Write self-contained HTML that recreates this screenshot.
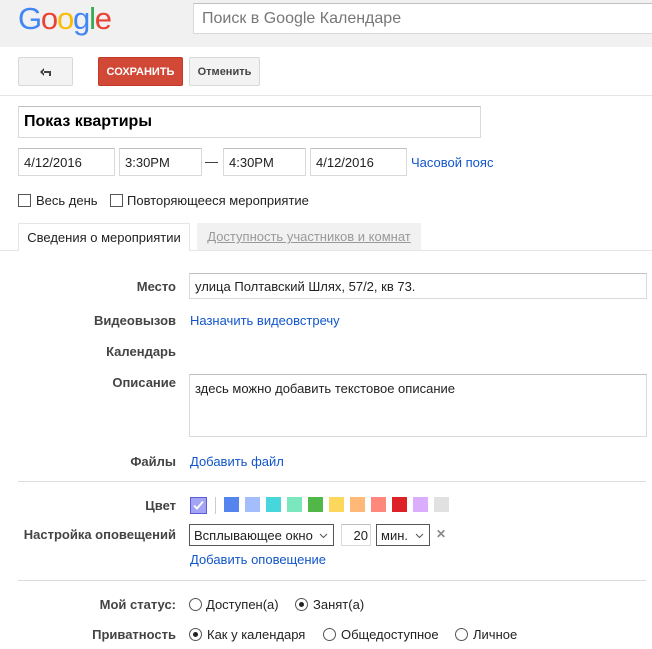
<!DOCTYPE html>
<html><head><meta charset="utf-8"><style>
*{box-sizing:border-box;margin:0;padding:0}
body{width:652px;height:649px;overflow:hidden;background:#fff;font-family:"Liberation Sans",Arial,sans-serif;font-size:13px;color:#222;position:relative}
.a{position:absolute;white-space:nowrap}
.inp{position:absolute;border:1px solid #d9d9d9;border-top-color:#c0c0c0;background:#fff;padding-left:5px;color:#222;display:flex;align-items:center}
.lbl{position:absolute;right:476px;font-weight:bold;color:#444;white-space:nowrap}
.lnk{color:#15c}
.line{position:absolute;height:1px;background:#dcdcdc}
.cb{position:absolute;width:13px;height:13px;border:1px solid #555;background:#fff}
.rd{position:absolute;width:13px;height:13px;border:1px solid #555;border-radius:50%;background:#fff}
.rd.on::after{content:"";position:absolute;left:3px;top:3px;width:5px;height:5px;border-radius:50%;background:#222}
.sw{position:absolute;top:497px;width:15px;height:15px}
.sel{position:absolute;border:1px solid #555;background:#fff;padding-left:4px;display:flex;align-items:center}
.sel svg{position:absolute;right:5px;top:8px}
.btn{position:absolute;top:57px;height:29px;border-radius:2px;font-weight:bold;font-size:11px;display:flex;align-items:center;justify-content:center}
</style></head><body>
<div class="a" style="left:0;top:0;width:652px;height:47px;background:#f1f1f1"></div>
<div class="a" style="left:18px;top:1px;font-size:31px;line-height:36px;letter-spacing:-1.2px"><span style="color:#4285f4">G</span><span style="color:#ea4335">o</span><span style="color:#fbbc05">o</span><span style="color:#4285f4">g</span><span style="color:#34a853">l</span><span style="color:#ea4335">e</span></div>
<div class="inp" style="left:193px;top:3px;width:470px;height:31px;font-size:16px;color:#777;padding-left:8px">Поиск в Google Календаре</div>

<div class="btn" style="left:18px;width:55px;border:1px solid #d8d8d8;background:#f3f3f3"><svg width="14" height="10" viewBox="0 0 14 10"><path d="M5 1 L1 5 L5 9 Z M4 4 H12 V9 H10 V6 H4Z" fill="#444"/></svg></div>
<div class="btn" style="left:98px;width:85px;background:#d14836;border:1px solid #c53727;color:#fff">СОХРАНИТЬ</div>
<div class="btn" style="left:189px;width:71px;border:1px solid #d8d8d8;background:#f3f3f3;color:#444">Отменить</div>
<div class="line" style="left:0;top:95px;width:652px;background:#e5e5e5"></div>

<div class="inp" style="left:18px;top:106px;width:463px;height:32px;font-size:16px;font-weight:bold;color:#000">Показ квартиры</div>
<div class="inp" style="left:18px;top:148px;width:97px;height:28px">4/12/2016</div>
<div class="inp" style="left:119px;top:148px;width:83px;height:28px">3:30PM</div>
<div class="a" style="left:205px;top:154px">—</div>
<div class="inp" style="left:223px;top:148px;width:83px;height:28px">4:30PM</div>
<div class="inp" style="left:310px;top:148px;width:97px;height:28px">4/12/2016</div>
<div class="a lnk" style="left:411px;top:155px">Часовой пояс</div>

<div class="cb" style="left:18px;top:194px"></div><div class="a" style="left:36px;top:193px">Весь день</div>
<div class="cb" style="left:110px;top:194px"></div><div class="a" style="left:127px;top:193px">Повторяющееся мероприятие</div>

<div class="line" style="left:0;top:250px;width:652px;background:#e5e5e5"></div>
<div class="a" style="left:18px;top:223px;width:172px;height:28px;border:1px solid #e5e5e5;border-bottom:none;background:#fff;text-align:center;line-height:28px">Сведения о мероприятии</div>
<div class="a" style="left:197px;top:223px;width:224px;height:27px;background:#f1f1f1;color:#999;text-decoration:underline;text-align:center;line-height:28px">Доступность участников и комнат</div>

<div class="lbl" style="top:279px">Место</div>
<div class="inp" style="left:189px;top:273px;width:458px;height:26px">улица Полтавский Шлях, 57/2, кв 73.</div>
<div class="lbl" style="top:313px">Видеовызов</div><div class="a lnk" style="left:190px;top:313px">Назначить видеовстречу</div>
<div class="lbl" style="top:344px">Календарь</div>
<div class="lbl" style="top:375px">Описание</div>
<div class="inp" style="left:189px;top:374px;width:458px;height:63px;align-items:flex-start;padding-top:6px">здесь можно добавить текстовое описание</div>
<div class="lbl" style="top:454px">Файлы</div><div class="a lnk" style="left:190px;top:454px">Добавить файл</div>
<div class="line" style="left:18px;top:481px;width:628px"></div>

<div class="lbl" style="top:498px">Цвет</div>
<div class="a" style="left:190px;top:497px;width:17px;height:17px;background:#a4a4f4;border:1px solid #5c5ce0"><svg width="15" height="15" viewBox="0 0 15 15"><path d="M3 7.5 L6 10.5 L12 3.5" stroke="#fff" stroke-width="1.8" fill="none"/></svg></div>
<div class="a" style="left:215px;top:497px;width:1px;height:17px;background:#ccc"></div>
<div class="sw" style="left:224px;background:#5484ed"></div>
<div class="sw" style="left:245px;background:#a4bdfc"></div>
<div class="sw" style="left:266px;background:#46d6db"></div>
<div class="sw" style="left:287px;background:#7ae7bf"></div>
<div class="sw" style="left:308px;background:#51b749"></div>
<div class="sw" style="left:329px;background:#fbd75b"></div>
<div class="sw" style="left:350px;background:#ffb878"></div>
<div class="sw" style="left:371px;background:#ff887c"></div>
<div class="sw" style="left:392px;background:#dc2127"></div>
<div class="sw" style="left:413px;background:#dbadff"></div>
<div class="sw" style="left:434px;background:#e1e1e1"></div>

<div class="lbl" style="top:527px">Настройка оповещений</div>
<div class="sel" style="left:189px;top:524px;width:145px;height:22px">Всплывающее окно<svg width="9" height="6"><path d="M1 1 L4.5 4.5 L8 1" stroke="#555" fill="none"/></svg></div>
<div class="inp" style="left:341px;top:524px;width:30px;height:22px;justify-content:flex-end;padding-right:2px">20</div>
<div class="sel" style="left:376px;top:524px;width:54px;height:22px">мин.<svg width="9" height="6"><path d="M1 1 L4.5 4.5 L8 1" stroke="#555" fill="none"/></svg></div>
<div class="a" style="left:436px;top:527px;color:#888;font-weight:bold;font-size:12px">✕</div>
<div class="a lnk" style="left:190px;top:552px">Добавить оповещение</div>
<div class="line" style="left:18px;top:580px;width:628px"></div>

<div class="lbl" style="top:597px">Мой статус:</div>
<div class="rd" style="left:189px;top:598px"></div><div class="a" style="left:206px;top:597px">Доступен(а)</div>
<div class="rd on" style="left:295px;top:598px"></div><div class="a" style="left:313px;top:597px">Занят(а)</div>
<div class="lbl" style="top:627px">Приватность</div>
<div class="rd on" style="left:189px;top:628px"></div><div class="a" style="left:207px;top:627px">Как у календаря</div>
<div class="rd" style="left:323px;top:628px"></div><div class="a" style="left:341px;top:627px">Общедоступное</div>
<div class="rd" style="left:455px;top:628px"></div><div class="a" style="left:473px;top:627px">Личное</div>
</body></html>
